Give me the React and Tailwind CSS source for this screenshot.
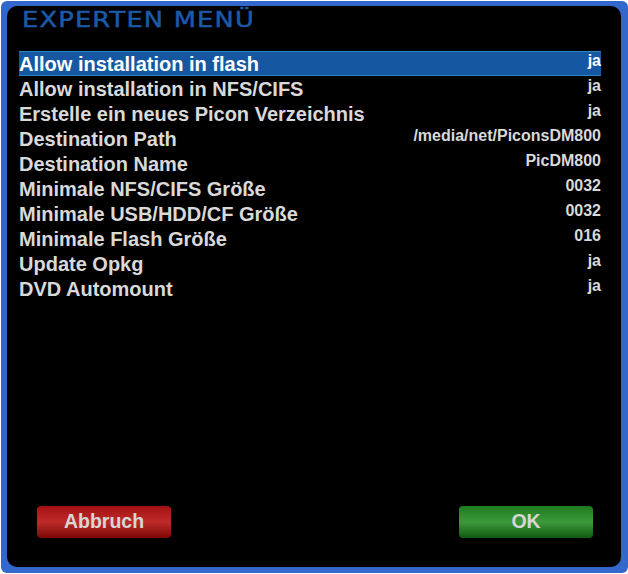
const rows = [
  { label: "Allow installation in flash", value: "ja" },
  { label: "Allow installation in NFS/CIFS", value: "ja" },
  { label: "Erstelle ein neues Picon Verzeichnis", value: "ja" },
  { label: "Destination Path", value: "/media/net/PiconsDM800" },
  { label: "Destination Name", value: "PicDM800" },
  { label: "Minimale NFS/CIFS Größe", value: "0032" },
  { label: "Minimale USB/HDD/CF Größe", value: "0032" },
  { label: "Minimale Flash Größe", value: "016" },
  { label: "Update Opkg", value: "ja" },
  { label: "DVD Automount", value: "ja" },
]

function Row({ label, value, active }) {
  return (
    <div
      className={
        active
          ? "flex items-start justify-between h-[25px] bg-[#1657a2] border-y border-[#2d86c4]"
          : "flex items-start justify-between h-[25px] border-y border-transparent"
      }
    >
      <span className={active ? "text-[20px] leading-[24px] font-bold text-white" : "text-[20px] leading-[24px] font-bold text-[#d9d9d9]"}>
        {label}
      </span>
      <span className={active ? "text-[16px] leading-[17px] font-bold text-white" : "text-[16px] leading-[17px] font-bold text-[#d9d9d9]"}>
        {value}
      </span>
    </div>
  )
}

function Button({ children, tone }) {
  const red = tone === "red"
  return (
    <div
      className={
        red
          ? "relative w-[134px] h-[32px] rounded-[4px] bg-gradient-to-b from-[#a30f0f] via-[#bf2a2a] to-[#7c0505] flex items-center justify-center"
          : "relative w-[134px] h-[32px] rounded-[4px] bg-gradient-to-b from-[#1d7a1d] via-[#3c9a3c] to-[#0f5a0f] flex items-center justify-center"
      }
    >
      <span className="text-[19.5px] font-bold text-[#d6d6d6]">{children}</span>
    </div>
  )
}

export default function App() {
  return (
    <div className="w-[628px] h-[574px] bg-white pl-[1px] pt-[1px] pb-[1px]" style={{ fontFamily: '"Liberation Sans", Arial, sans-serif' }}>
      <div className="w-full h-full bg-[#3367cc] rounded-[6px] pl-[6px] pt-[5px] pr-[7px] pb-[6px]">
        <div className="w-full h-full bg-black rounded-[10px] flex flex-col">
          <div className="pl-[15px] pt-[3px] h-[45px]">
            <span
              className="inline-block origin-left scale-x-[1.17] text-[22px] leading-[22px] text-[#1a5aa8] tracking-[1px] [-webkit-text-stroke:0.5px_#1a5aa8]"
              style={{ fontFamily: '"DejaVu Sans", sans-serif', fontWeight: 400 }}
            >
              EXPERTEN MENÜ
            </span>
          </div>
          <div className="pl-[12px] pr-[20px]">
            {rows.map((r, i) => (
              <Row key={r.label} label={r.label} value={r.value} active={i === 0} />
            ))}
          </div>
          <div className="flex-1" />
          <div className="flex justify-between pl-[30px] pr-[28px] pb-[29px]">
            <Button tone="red">Abbruch</Button>
            <Button tone="green">OK</Button>
          </div>
        </div>
      </div>
    </div>
  )
}
